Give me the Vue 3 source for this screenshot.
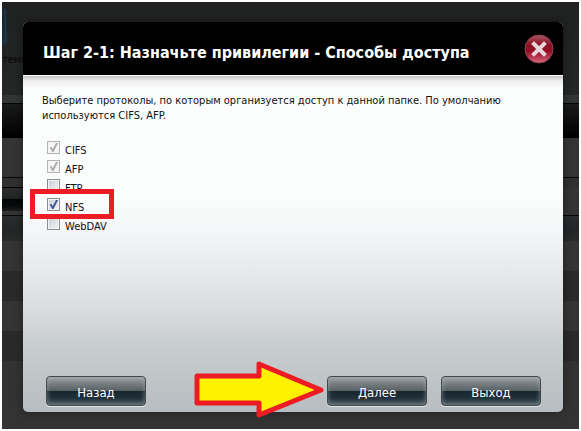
<template>
  <div class="page">
    <div class="backdrop">
      <div class="toolbar">
        <svg class="device-icon" width="6" height="38" viewBox="0 0 6 38">
          <path d="M0 0 L3 1 L5 33 L4 37 L0 38 Z" fill="#172a36" />
          <path d="M3 1 L4 33 L0 35" fill="none" stroke="#234459" />
        </svg>
        <span class="device-label">темы</span>
      </div>
      <div class="band light"></div>
      <div class="band menu"></div>
      <div class="band panel"></div>
      <div class="band sub"></div>
      <div class="band tab"><i></i></div>
      <div class="band table-head"></div>
      <div class="band row"></div>
      <div class="band row dark"></div>
      <div class="band row"></div>
      <div class="band row dark"></div>
      <div class="band rest"></div>
    </div>

    <div class="overlay">
      <section class="dialog" role="dialog" aria-labelledby="wizard-title">
        <header class="dialog-header">
          <h1 id="wizard-title">Шаг 2-1: Назначьте привилегии - Способы доступа</h1>
          <button class="close" type="button" aria-label="Закрыть">
            <svg width="30" height="30" viewBox="0 0 30 30">
              <defs>
                <linearGradient id="closeFill" x1="0" y1="0" x2="0" y2="1">
                  <stop offset="0" stop-color="#a85560" />
                  <stop offset="0.35" stop-color="#8c1226" />
                  <stop offset="0.6" stop-color="#980d26" />
                  <stop offset="1" stop-color="#d86a80" />
                </linearGradient>
              </defs>
              <circle cx="15" cy="15" r="14" fill="url(#closeFill)" stroke="#8e4350" />
              <path d="M10 10 L20 20 M20 10 L10 20" stroke="#e6d6da" stroke-width="4" stroke-linecap="square" />
            </svg>
          </button>
        </header>

        <div class="dialog-body">
          <p class="hint">Выберите протоколы, по которым организуется доступ к данной папке. По умолчанию используются CIFS, AFP.</p>
          <ul class="protocols">
            <li v-for="item in protocols" :key="item.id">
              <input :id="item.id" v-model="item.checked" type="checkbox" :disabled="item.disabled">
              <label :for="item.id">{{ item.name }}</label>
              <span v-if="item.marked" class="marker"></span>
            </li>
          </ul>
        </div>

        <footer class="dialog-footer">
          <button class="btn back" type="button">Назад</button>
          <div class="next">
            <svg class="arrow" width="130" height="60" viewBox="0 0 130 60">
              <path d="M3 16 H65 V4 L127 30 L65 55 V43 H3 Z" fill="#fff200" stroke="#ed1c24" stroke-width="5" stroke-linejoin="round" />
            </svg>
            <button class="btn" type="button">Далее</button>
          </div>
          <button class="btn" type="button">Выход</button>
        </footer>
      </section>
    </div>
  </div>
</template>

<script setup>
import { reactive } from 'vue'

const protocols = reactive([
  { id: 'cifs', name: 'CIFS', checked: true, disabled: true },
  { id: 'afp', name: 'AFP', checked: true, disabled: true },
  { id: 'ftp', name: 'FTP', checked: false, disabled: false },
  { id: 'nfs', name: 'NFS', checked: true, disabled: false, marked: true },
  { id: 'webdav', name: 'WebDAV', checked: false, disabled: false }
])
</script>

<style>
body {
  background: #fff;
}
</style>

<style scoped>
.page {
  position: relative;
  margin: 2px;
  overflow: hidden;
  background: #333;
  font-family: Tahoma, "DejaVu Sans Condensed", "Noto Sans", sans-serif;
  font-size: 11px;
}

.toolbar {
  height: 93px;
  box-sizing: border-box;
  padding-top: 6px;
  background: linear-gradient(#202121, #252727);
}

.device-icon {
  display: block;
}

.device-label {
  display: block;
  padding-top: 6px;
  color: #080808;
  line-height: 15px;
}

.band {
  box-sizing: border-box;
}

.light {
  height: 8px;
  background: #333535;
}

.menu {
  height: 35px;
  border-top: 1px solid #050505;
  background: linear-gradient(#191a1a, #000);
}

.panel {
  height: 40px;
  border-bottom: 1px solid #080808;
  background: #343434;
}

.sub {
  height: 9px;
  background: #303030;
}

.tab {
  display: flex;
  height: 29px;
  border-bottom: 1px solid #080808;
  background: #343434;
}

.tab i {
  width: 21px;
  height: 24px;
  box-sizing: border-box;
  border-top: 1px solid #000;
  background: linear-gradient(#2c2d2d, #222323 45%, #040707 50%, #080b0c 80%, #1c1f1f);
}

.table-head {
  height: 25px;
  background: linear-gradient(#2c2d2e, #232526 50%, #2a2b2b);
}

.row {
  height: 30px;
  background: #343434;
}

.dark {
  background: #2a2a2a;
}

.rest {
  height: 68px;
  background: #333;
}

.overlay {
  position: absolute;
  inset: 0;
  display: flex;
  padding: 20px 16px 17px 21px;
}

.dialog {
  display: flex;
  flex: 1;
  flex-direction: column;
  border-radius: 5px;
  background: linear-gradient(#fbfdfc 45%, #f1f3f5 56%, #dcdddf 73%, #c8cdcf 83%, #b7bdc0);
  box-shadow: 0 0 10px rgba(0, 0, 0, 0.4);
}

.dialog-header {
  display: flex;
  align-items: flex-start;
  justify-content: space-between;
  height: 53px;
  box-sizing: border-box;
  padding: 12px 9px 0 20px;
  border-radius: 5px 5px 0 0;
  background: #000;
}

h1 {
  margin: 0;
  padding-top: 8px;
  color: #fff;
  font-size: 16px;
  font-weight: bold;
  line-height: 22px;
  white-space: nowrap;
}

.close {
  display: block;
  padding: 0;
  border: 0;
  background: none;
}

.close svg {
  display: block;
}

.dialog-body {
  flex: 1;
  border-top: 1px solid #fff;
  padding: 17px 60px 0 19px;
  background: linear-gradient(#c6c6c6, rgba(230, 230, 230, 0.6) 5px, rgba(255, 255, 255, 0) 13px);
}

.hint {
  margin: 0;
  color: #111;
  line-height: 15px;
}

.protocols {
  margin: 18px 0 0;
  padding: 0 0 0 5px;
  list-style: none;
}

li {
  position: relative;
  display: flex;
  align-items: flex-start;
  gap: 5px;
  height: 19px;
}

label {
  padding-top: 3px;
  color: #111;
  line-height: 14px;
}

input {
  width: 13px;
  height: 13px;
  box-sizing: border-box;
  margin: 0;
  border: 1px solid #8e8f8f;
  outline: 1px solid #f4f4f4;
  outline-offset: -2px;
  background: linear-gradient(135deg, #c8cdd4, #f6f6f6);
  appearance: none;
}

input:checked::after {
  display: block;
  width: 11px;
  height: 11px;
  background: #3d5494;
  clip-path: polygon(15% 50%, 32% 45%, 43% 65%, 72% 8%, 92% 8%, 50% 92%, 38% 92%);
  content: "";
}

input:disabled {
  border-color: #b4b4b4;
  background: #f5f5f5;
}

input:disabled::after {
  background: #ababab;
}

.marker {
  position: absolute;
  top: -9px;
  left: -17px;
  width: 84px;
  height: 30px;
  box-sizing: border-box;
  border: 5px solid #ed1c24;
  z-index: 1;
}

.dialog-footer {
  display: flex;
  gap: 14px;
  padding: 10px 22px 6px 23px;
}

.btn {
  width: 100px;
  height: 30px;
  box-sizing: border-box;
  padding: 4px 0 0;
  border: 1px solid #42484b;
  border-radius: 4px;
  color: #fff;
  font-family: inherit;
  font-size: 13px;
  line-height: 16px;
  background: linear-gradient(#a0a5a8, #767d80 25%, #566065 49%, #17252d 50%, #20313a 75%, #4b5b63);
  box-shadow: inset 0 0 5px rgba(170, 180, 185, 0.6), 0 1px 0 #e4e7e8;
}

.back {
  margin-right: auto;
}

.next {
  position: relative;
}

.arrow {
  position: absolute;
  top: -16px;
  right: 103px;
}
</style>
